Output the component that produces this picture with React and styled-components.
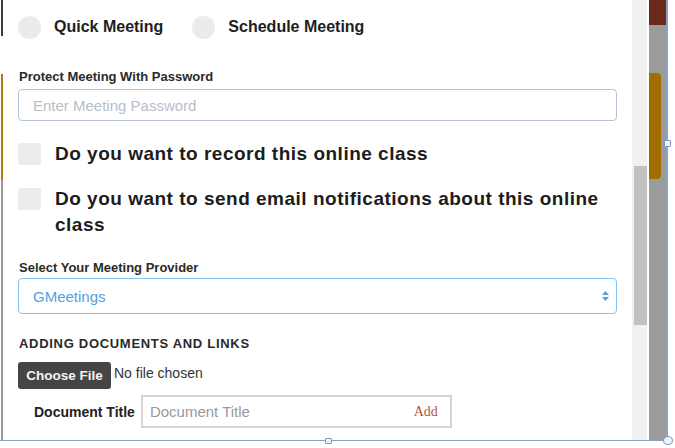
import React from 'react'
import styled, { createGlobalStyle } from 'styled-components'

const GlobalStyle = createGlobalStyle`
  html, body {
    margin: 0;
    padding: 0;
    background: #ffffff;
    font-family: "Liberation Sans", Arial, sans-serif;
    color: #222;
  }
  * { box-sizing: border-box; }
`

const Page = styled.div`
  width: 675px;
  height: 448px;
  position: relative;
  overflow: hidden;
  background: #fff;
`

const Frame = styled.div`
  display: flex;
  width: 668px;
  height: 441px;
  border-bottom: 1px solid #8ea3bb;
`

const LeftEdge = styled.div`
  width: 4px;
  display: flex;
  flex-direction: column;
  padding-left: 1px;
`

const EdgeSeg = styled.div`
  width: 2px;
  height: ${p => p.h}px;
  flex: ${p => (p.h ? 'none' : '1')};
  background: ${p => p.c};
`

const Panel = styled.div`
  flex: 1;
  padding: 16px 15px 0 14px;
  display: flex;
  flex-direction: column;
`

const RadioRow = styled.div`
  display: flex;
  align-items: center;
  height: 22px;
`

const Radio = styled.span`
  width: 23px;
  height: 23px;
  border-radius: 50%;
  background: #ebebeb;
  margin-right: 13px;
  margin-left: ${p => p.offset || 0}px;
`

const RadioText = styled.span`
  font-size: 16px;
  font-weight: 700;
  color: #1e1e1e;
`

const Label = styled.div`
  font-size: 13px;
  line-height: 15px;
  font-weight: 700;
  color: #2a2a2a;
  margin-top: ${p => p.top}px;
  margin-left: 1px;
  letter-spacing: ${p => (p.caps ? '0.7px' : '0')};
`

const TextInput = styled.div`
  height: 32px;
  margin-top: 5px;
  border: 1px solid #b4c2d2;
  border-radius: 4px;
  display: flex;
  align-items: center;
  padding-left: 14px;
  font-size: 15px;
  color: #b7bec8;
`

const CheckRow = styled.div`
  display: flex;
  align-items: flex-start;
  margin-top: ${p => p.top}px;
`

const Check = styled.span`
  flex: none;
  width: 23px;
  height: 22px;
  border-radius: 2px;
  background: #ececec;
  margin: 2px 14px 0 0;
`

const CheckText = styled.span`
  font-size: 19px;
  font-weight: 700;
  line-height: 26px;
  color: #1c1c1c;
  letter-spacing: 0.5px;
`

const SelectBox = styled.div`
  height: 36px;
  margin-top: 3px;
  border: 1px solid #86c3f3;
  border-radius: 4px;
  display: flex;
  align-items: center;
  justify-content: space-between;
  padding: 0 6px 0 14px;
  font-size: 15px;
  color: #4ea2e6;
`

const FileRow = styled.div`
  display: flex;
  align-items: flex-start;
  margin-top: 11px;
`

const FileButton = styled.button`
  height: 27px;
  width: 93px;
  border: none;
  border-radius: 3px;
  background: #454545;
  color: #f4f4f4;
  font-family: inherit;
  font-size: 13.5px;
  font-weight: 700;
  padding: 0;
  margin-right: 3px;
`

const FileNote = styled.span`
  font-size: 14px;
  color: #333;
  margin-top: 3px;
`

const TitleRow = styled.div`
  display: flex;
  align-items: center;
  margin-top: 6px;
  padding-left: 16px;
`

const TitleLabel = styled.span`
  font-size: 14px;
  font-weight: 700;
  color: #222;
  margin-right: 6px;
`

const TitleInput = styled.div`
  width: 311px;
  height: 33px;
  border: 2px solid #d4d4d4;
  display: flex;
  align-items: center;
  justify-content: space-between;
  padding: 0 12px 0 7px;
  font-size: 15px;
  color: #9a9a9a;
`

const AddLink = styled.span`
  font-family: "Liberation Serif", "Times New Roman", serif;
  font-size: 14px;
  color: #b5503c;
`

const Scrollbar = styled.div`
  width: 17px;
  background: #f0f0f0;
  display: flex;
  flex-direction: column;
  padding: 166px 0 0 2px;
  border-right: 2px solid #fff;
`

const Thumb = styled.div`
  height: 159px;
  background: #c1c1c1;
`

const SideStrip = styled.div`
  width: 19px;
  background: #9b9b9b;
  display: flex;
  flex-direction: column;
  border-right: 2px solid #8ea3bb;
`

const StripBlock = styled.div`
  height: ${p => p.h}px;
  margin-top: ${p => p.top || 0}px;
  width: ${p => p.w}px;
  background: ${p => p.c};
  border-radius: ${p => p.r || '0'};
`

const Handle = styled.span`
  position: absolute;
  left: ${p => p.x}px;
  top: ${p => p.y}px;
  width: ${p => p.w}px;
  height: ${p => p.h}px;
  background: #eef4fb;
  border: 1px solid #7d99bb;
  border-radius: ${p => (p.round ? '50%' : '1px')};
`

const SortIcon = () => (
  <svg width="9" height="12" viewBox="0 0 9 12">
    <path d="M4.5 1 L8 5 L1 5 Z" fill="#4ea2e6" />
    <path d="M4.5 11 L8 7 L1 7 Z" fill="#4ea2e6" />
  </svg>
)

export default function App() {
  return (
    <Page>
      <GlobalStyle />
      <Frame>
        <LeftEdge>
          <EdgeSeg h={36} c="#3a3a3a" />
          <EdgeSeg h={38} c="#ffffff" />
          <EdgeSeg h={106} c="#b07a0c" />
          <EdgeSeg c="#9a9a9a" />
        </LeftEdge>
        <Panel>
          <RadioRow>
            <Radio />
            <RadioText>Quick Meeting</RadioText>
            <Radio offset={29} />
            <RadioText>Schedule Meeting</RadioText>
          </RadioRow>
          <Label top={31}>Protect Meeting With Password</Label>
          <TextInput>Enter Meeting Password</TextInput>
          <CheckRow top={20}>
            <Check />
            <CheckText>Do you want to record this online class</CheckText>
          </CheckRow>
          <CheckRow top={19}>
            <Check />
            <CheckText>
              Do you want to send email notifications about this online class
            </CheckText>
          </CheckRow>
          <Label top={22}>Select Your Meeting Provider</Label>
          <SelectBox>
            GMeetings
            <SortIcon />
          </SelectBox>
          <Label top={22} caps>ADDING DOCUMENTS AND LINKS</Label>
          <FileRow>
            <FileButton>Choose File</FileButton>
            <FileNote>No file chosen</FileNote>
          </FileRow>
          <TitleRow>
            <TitleLabel>Document Title</TitleLabel>
            <TitleInput>
              Document Title
              <AddLink>Add</AddLink>
            </TitleInput>
          </TitleRow>
        </Panel>
        <Scrollbar>
          <Thumb />
        </Scrollbar>
        <SideStrip>
          <StripBlock h={25} w={17} c="#6a2a1a" />
          <StripBlock h={106} w={12} top={48} c="#a16f00" r="0 4px 4px 0" />
        </SideStrip>
      </Frame>
      <Handle x={325} y={438} w={7} h={6} />
      <Handle x={664} y={140} w={7} h={7} />
      <Handle x={663} y={436} w={10} h={9} round />
    </Page>
  )
}
